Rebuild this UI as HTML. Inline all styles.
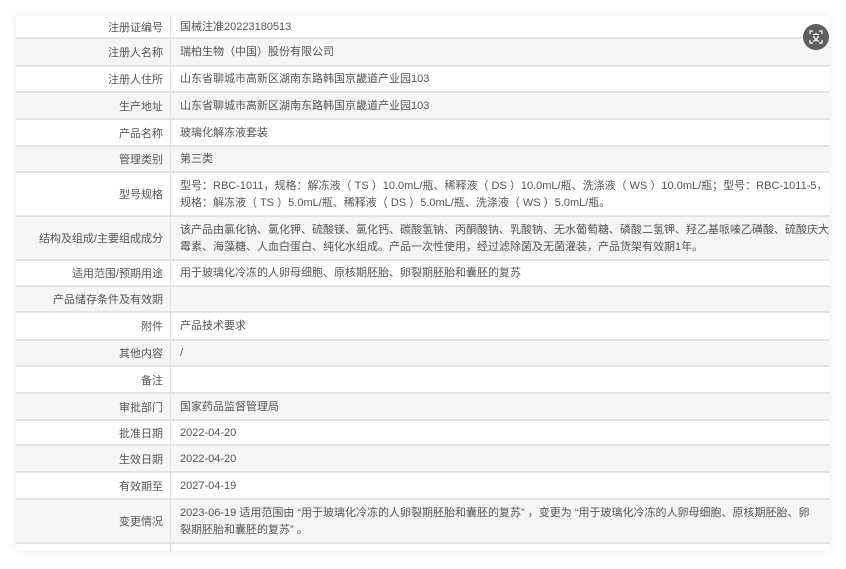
<!DOCTYPE html>
<html><head><meta charset="utf-8"><style>
*{margin:0;padding:0;box-sizing:border-box}
body{width:846px;height:569px;background:#fff;font-family:"Liberation Sans","Noto Sans CJK SC",sans-serif;font-size:11px;color:#555;position:relative;overflow:hidden}
.t{position:absolute;left:16px;top:16px;width:814px;box-shadow:0 0 8px rgba(0,0,0,0.08)}
.r{display:flex;border-bottom:2px solid #e4e4e4;background:#fff}
.r:nth-child(even){background:#f6f6f6}
.l{flex:0 0 155px;width:155px;text-align:right;padding-right:7px;border-right:1.5px solid #e2e2e2;display:flex;align-items:center;justify-content:flex-end;white-space:nowrap}
.v{flex:1 1 0;min-width:0;overflow:hidden;padding-left:9px;padding-right:0;display:flex;align-items:center;line-height:17px;white-space:nowrap;padding-top:1px}
.c{position:absolute;left:803px;top:24px;width:26px;height:26px;border-radius:50%;background:#606060}
</style></head><body>
<div class="t">
<div class="r" style="height:23px"><div class="l">注册证编号</div><div class="v">国械注准20223180513</div></div>
<div class="r" style="height:28px"><div class="l">注册人名称</div><div class="v">瑞柏生物（中国）股份有限公司</div></div>
<div class="r" style="height:26px"><div class="l">注册人住所</div><div class="v">山东省聊城市高新区湖南东路韩国京畿道产业园103</div></div>
<div class="r" style="height:27px"><div class="l">生产地址</div><div class="v">山东省聊城市高新区湖南东路韩国京畿道产业园103</div></div>
<div class="r" style="height:27px"><div class="l">产品名称</div><div class="v">玻璃化解冻液套装</div></div>
<div class="r" style="height:26px"><div class="l">管理类别</div><div class="v">第三类</div></div>
<div class="r" style="height:44px"><div class="l">型号规格</div><div class="v">型号：RBC-1011，规格：解冻液（ TS ）10.0mL/瓶、稀释液（ DS ）10.0mL/瓶、洗涤液（ WS ）10.0mL/瓶；型号：RBC-1011-5，<br>规格：解冻液（ TS ）5.0mL/瓶、稀释液（ DS ）5.0mL/瓶、洗涤液（ WS ）5.0mL/瓶。</div></div>
<div class="r" style="height:44px"><div class="l">结构及组成/主要组成成分</div><div class="v">该产品由氯化钠、氯化钾、硫酸镁、氯化钙、碳酸氢钠、丙酮酸钠、乳酸钠、无水葡萄糖、磷酸二氢钾、羟乙基哌嗪乙磺酸、硫酸庆大<br>霉素、海藻糖、人血白蛋白、纯化水组成。产品一次性使用，经过滤除菌及无菌灌装，产品货架有效期1年。</div></div>
<div class="r" style="height:26px"><div class="l">适用范围/预期用途</div><div class="v">用于玻璃化冷冻的人卵母细胞、原核期胚胎、卵裂期胚胎和囊胚的复苏</div></div>
<div class="r" style="height:26px"><div class="l">产品储存条件及有效期</div><div class="v"></div></div>
<div class="r" style="height:28px"><div class="l">附件</div><div class="v">产品技术要求</div></div>
<div class="r" style="height:26px"><div class="l">其他内容</div><div class="v">/</div></div>
<div class="r" style="height:27px"><div class="l">备注</div><div class="v"></div></div>
<div class="r" style="height:27px"><div class="l">审批部门</div><div class="v">国家药品监督管理局</div></div>
<div class="r" style="height:25px"><div class="l">批准日期</div><div class="v">2022-04-20</div></div>
<div class="r" style="height:27px"><div class="l">生效日期</div><div class="v">2022-04-20</div></div>
<div class="r" style="height:27px"><div class="l">有效期至</div><div class="v">2027-04-19</div></div>
<div class="r" style="height:44px"><div class="l">变更情况</div><div class="v">2023-06-19 适用范围由 “用于玻璃化冷冻的人卵裂期胚胎和囊胚的复苏” ，变更为 “用于玻璃化冷冻的人卵母细胞、原核期胚胎、卵<br>裂期胚胎和囊胚的复苏” 。</div></div>
<div class="r" style="height:7px;border-bottom:none"><div class="l"></div><div class="v"></div></div>
</div>
<div class="c"><svg width="26" height="26" viewBox="0 0 26 26" fill="none" stroke="#fff" stroke-width="1.2"><path d="M7 10V7h3M16 7h3v3M19 16v3h-3M10 19H7v-3"/><path d="M10 10.5h6M13 9v1.5M10.5 12c1 3 3 4.5 5.5 5.5M15.5 12c-1 3-3 4.5-5.5 5.5"/></svg></div>
</body></html>
